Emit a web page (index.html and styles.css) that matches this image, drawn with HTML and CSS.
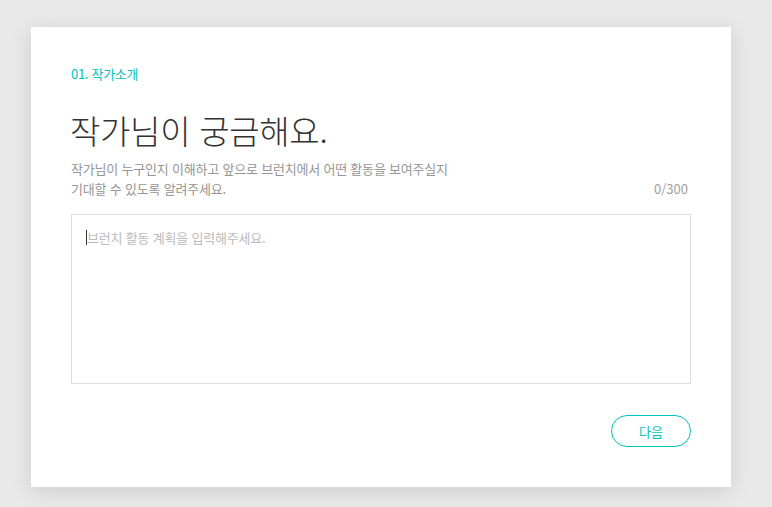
FILE: index.html
```html
<!DOCTYPE html>
<html lang="ko">
<head>
<meta charset="utf-8">
<link rel="stylesheet" href="styles.css">
</head>
<body>
<div class="page">
  <section class="card">
    <div class="step">01. 작가소개</div>
    <h1 class="title">작가님이 궁금해요.</h1>
    <div class="desc-row">
      <p class="desc">작가님이 누구인지 이해하고 앞으로 브런치에서 어떤 활동을 보여주실지<br>기대할 수 있도록 알려주세요.</p>
      <span class="count">0/300</span>
    </div>
    <div class="field">
      <span class="caret"></span><span class="placeholder">브런치 활동 계획을 입력해주세요.</span>
    </div>
    <div class="actions">
      <button class="next">다음</button>
    </div>
  </section>
</div>
</body>
</html>
```
FILE: styles.css
```css
html, body {
  margin: 0;
  padding: 0;
}
body {
  background: #e9e9e9;
  font-family: "Noto Sans CJK KR", "Noto Sans", sans-serif;
  width: 772px;
  height: 507px;
  overflow: hidden;
}
.page {
  padding: 27px 0 0 31px;
}
.card {
  width: 700px;
  height: 460px;
  box-sizing: border-box;
  background: #fff;
  padding: 38px 40px 0 40px;
  box-shadow: 0 4px 20px rgba(0,0,0,0.12);
}
.step {
  font-size: 13px;
  line-height: 18px;
  color: #00c3bd;
  letter-spacing: -0.3px;
}
.title {
  margin: 27px 0 0 -1px;
  font-size: 33px;
  line-height: 40px;
  font-weight: 300;
  color: #333;
  letter-spacing: -0.3px;
}
.desc-row {
  display: flex;
  justify-content: space-between;
  align-items: flex-end;
  margin-top: 9px;
  padding-right: 3px;
}
.desc {
  margin: 0;
  font-size: 13px;
  line-height: 20px;
  color: #959595;
  letter-spacing: -0.2px;
}
.count {
  font-size: 13px;
  line-height: 20px;
  color: #a0a0a0;
}
.field {
  margin-top: 15px;
  height: 170px;
  border: 1px solid #dddddd;
  box-sizing: border-box;
  padding: 13px 14px;
  display: flex;
  align-items: flex-start;
}
.caret {
  width: 1px;
  height: 15px;
  background: #333;
  margin-top: 2px;
}
.placeholder {
  font-size: 13px;
  line-height: 20px;
  color: #bbbbbb;
  letter-spacing: -0.2px;
}
.actions {
  display: flex;
  justify-content: flex-end;
  margin-top: 31px;
}
.next {
  width: 80px;
  height: 32px;
  border: 1px solid #00c3bd;
  border-radius: 16px;
  background: #fff;
  color: #00c3bd;
  font-family: inherit;
  font-size: 13px;
  padding: 0;
}
```
